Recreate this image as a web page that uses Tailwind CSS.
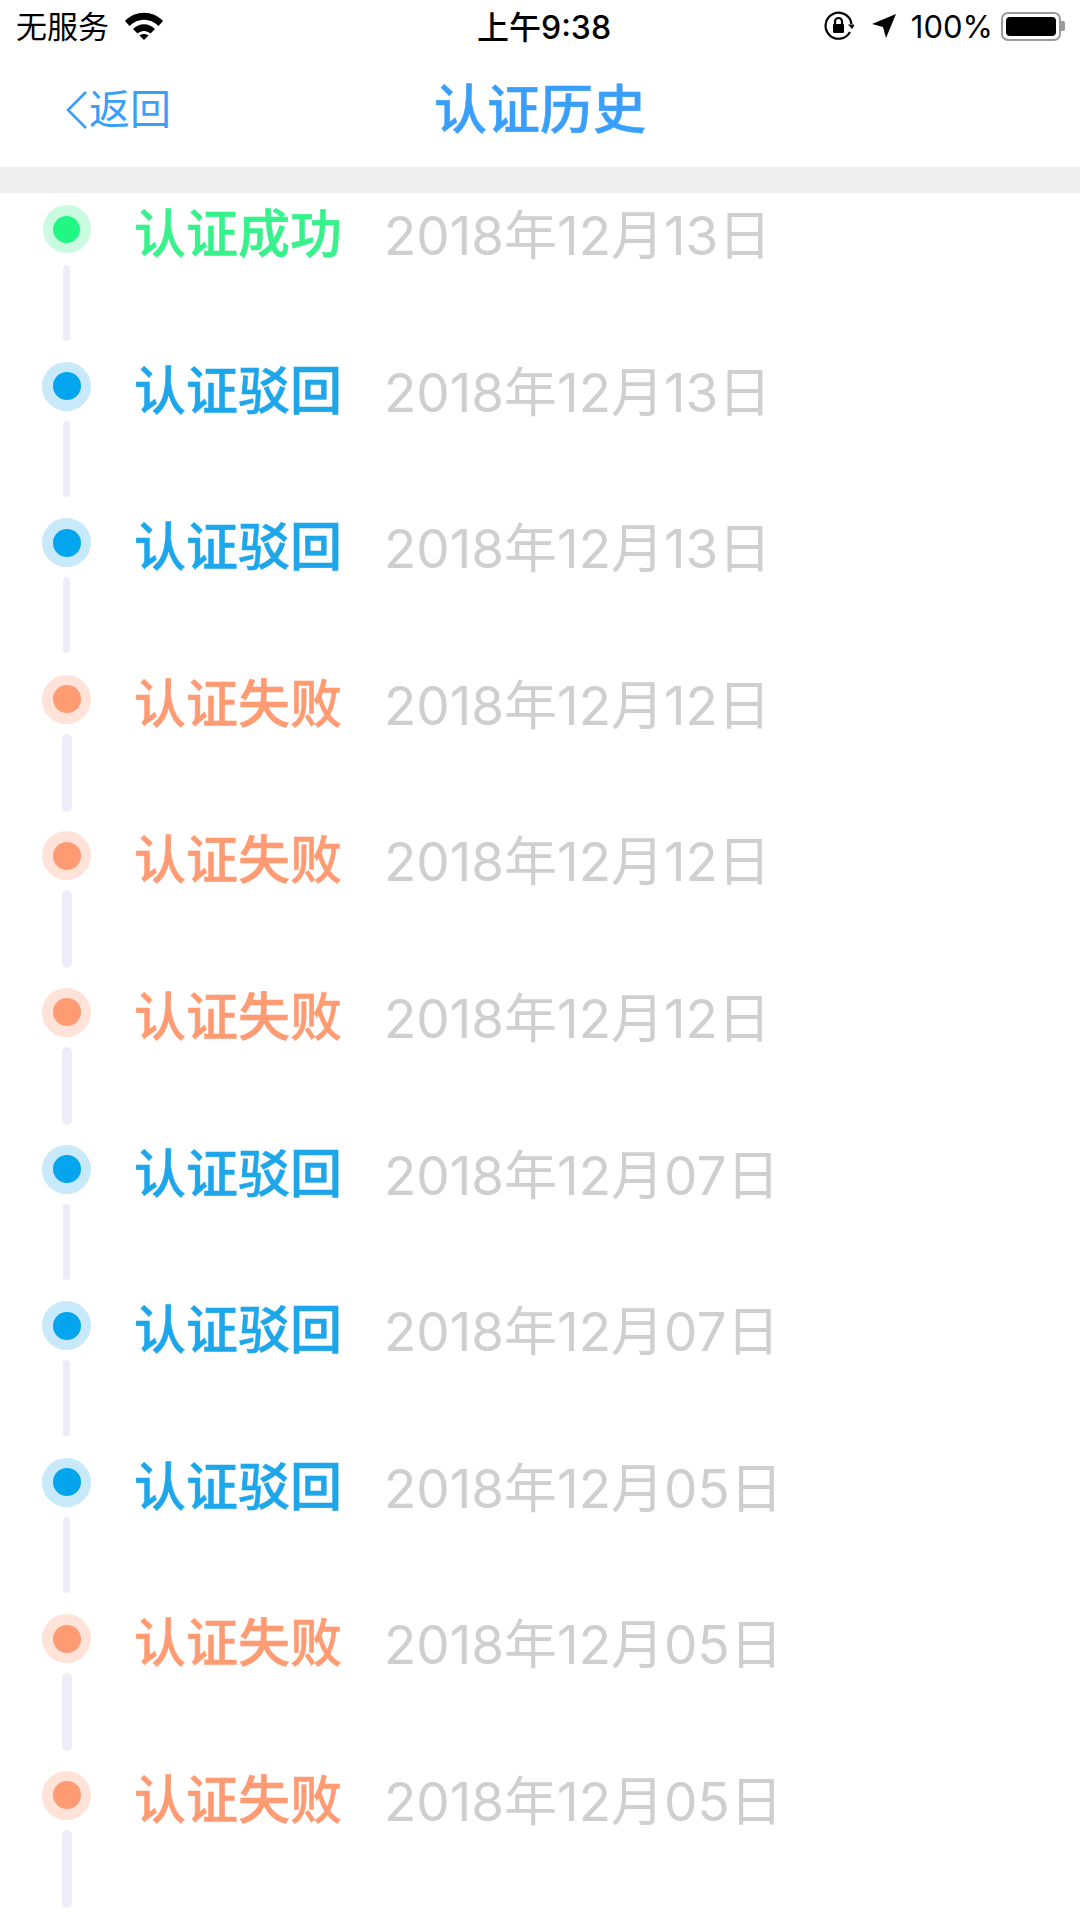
<!DOCTYPE html>
<html lang="zh-CN">

<head>
  <meta charset="UTF-8">
  <title>认证历史</title>
  <script src="https://cdn.jsdelivr.net/npm/@tailwindcss/browser@4"></script>
</head>

<body class="bg-white font-['Inter','Noto_Sans_CJK_SC',sans-serif]">
  <div class="w-[1080px] h-[1920px] overflow-hidden">
    <!-- Status bar -->
    <div class="relative h-[52px] flex items-center justify-between pl-[16px] pr-[13px] text-black">
      <div class="flex items-center gap-[16px]">
        <span class="text-[31px] leading-none">无服务</span>
        <svg class="w-[38px] h-[28px]" viewBox="0 0 38 28" fill="currentColor">
          <path d="M0 9 C10 -2 28 -2 38 9 L33.500 14 C25 5.500 13 5.500 4.500 14 Z" />
          <path d="M8 17 C14 10.500 24 10.500 30 17 L25.500 21.500 C22 18 16 18 12.500 21.500 Z" />
          <path d="M14.500 23.500 C17 21.500 21 21.500 23.500 23.500 L19 28 Z" />
        </svg>
      </div>
      <span class="absolute left-[477px] top-[10px] text-[32px] leading-[36px] font-medium">上午9:38</span>
      <div class="flex items-center">
        <svg class="w-[30px] h-[30px] mr-[17px]" viewBox="0 0 30 30" fill="none" stroke="currentColor" stroke-width="2.200">
          <path d="M26 21 A13 13 0 1 1 27.500 13" />
          <path d="M24 13.500 L28 18 L31 13.500 Z" fill="currentColor" stroke="none" />
          <rect x="9" y="13" width="11" height="9" rx="1" fill="currentColor" stroke="none" />
          <path d="M11 13 V10.500 A3.500 3.500 0 0 1 18 10.500 V13" />
        </svg>
        <svg class="w-[26px] h-[26px] mr-[14px]" viewBox="0 0 26 26" fill="currentColor">
          <path d="M25 1 L15 25 L12 14 L1 11 Z" />
        </svg>
        <span class="text-[31px] leading-none mr-[8px]">100%</span>
        <div class="w-[60px] h-[29px] rounded-[7px] border-[2px] border-[#9a9a9a] p-[3px]">
          <div class="w-full h-full rounded-[4px] bg-black"></div>
        </div>
        <div class="w-[4px] h-[10px] rounded-r-[2px] bg-[#9a9a9a] mr-[2px]"></div>
      </div>
    </div>

    <!-- Navigation bar -->
    <div class="relative h-[115px] flex items-center justify-center">
      <div class="absolute left-[65px] top-[37px] flex items-center text-[#3a9ffb]">
        <svg class="w-[24px] h-[40px]" viewBox="0 0 24 40" fill="none" stroke="currentColor" stroke-width="2.600">
          <path d="M21 2 L3 20 L21 38" />
        </svg>
        <span class="text-[41px] leading-none">返回</span>
      </div>
      <h1 class="text-[53px] leading-none font-medium [-webkit-text-stroke:0.5px] text-[#3a9ffb] mt-[2px]">认证历史</h1>
    </div>
    <div class="h-[26px] bg-[#efefef]"></div>

    <!-- History list -->
    <ul class="pt-[12px]">
      <li class="h-[156.6px] flex">
        <div class="w-[134px] flex flex-col items-center pr-[1px] shrink-0">
          <div class="w-[48px] h-[48px] rounded-full bg-[#c9fbe0] flex items-center justify-center">
            <div class="w-[27px] h-[27px] rounded-full bg-[#22f784]"></div>
          </div>
          <div class="w-[7px] h-[76px] mt-[12px] rounded-full bg-[#eeecf9]"></div>
        </div>
        <span class="w-[250px] mt-[1px] text-[52px] leading-[58px] font-medium [-webkit-text-stroke:0.5px] text-[#37f28b]">认证成功</span>
        <span class="mt-[2px] text-[53px] leading-[58px] text-[#cfcfcf]">2018年12月13日</span>
      </li>
      <li class="h-[156.6px] flex">
        <div class="w-[134px] flex flex-col items-center pr-[1px] shrink-0">
          <div class="w-[49px] h-[49px] rounded-full bg-[#c8e9fa] flex items-center justify-center">
            <div class="w-[28px] h-[28px] rounded-full bg-[#03a5ee]"></div>
          </div>
          <div class="w-[7px] h-[76px] mt-[10px] rounded-full bg-[#eeecf9]"></div>
        </div>
        <span class="w-[250px] mt-[1px] text-[52px] leading-[58px] font-medium [-webkit-text-stroke:0.5px] text-[#1ea6ea]">认证驳回</span>
        <span class="mt-[2px] text-[53px] leading-[58px] text-[#cfcfcf]">2018年12月13日</span>
      </li>
      <li class="h-[156.6px] flex">
        <div class="w-[134px] flex flex-col items-center pr-[1px] shrink-0">
          <div class="w-[49px] h-[49px] rounded-full bg-[#c8e9fa] flex items-center justify-center">
            <div class="w-[28px] h-[28px] rounded-full bg-[#03a5ee]"></div>
          </div>
          <div class="w-[7px] h-[76px] mt-[10px] rounded-full bg-[#eeecf9]"></div>
        </div>
        <span class="w-[250px] mt-[1px] text-[52px] leading-[58px] font-medium [-webkit-text-stroke:0.5px] text-[#1ea6ea]">认证驳回</span>
        <span class="mt-[2px] text-[53px] leading-[58px] text-[#cfcfcf]">2018年12月13日</span>
      </li>
      <li class="h-[156.6px] flex">
        <div class="w-[134px] flex flex-col items-center pr-[1px] shrink-0">
          <div class="w-[49px] h-[49px] rounded-full bg-[#ffe3d9] flex items-center justify-center">
            <div class="w-[28px] h-[28px] rounded-full bg-[#ff9b73]"></div>
          </div>
          <div class="w-[10px] h-[78px] mt-[10px] rounded-full bg-[#eeecf9]"></div>
        </div>
        <span class="w-[250px] mt-[1px] text-[52px] leading-[58px] font-medium [-webkit-text-stroke:0.5px] text-[#ff9b73]">认证失败</span>
        <span class="mt-[2px] text-[53px] leading-[58px] text-[#cfcfcf]">2018年12月12日</span>
      </li>
      <li class="h-[156.6px] flex">
        <div class="w-[134px] flex flex-col items-center pr-[1px] shrink-0">
          <div class="w-[49px] h-[49px] rounded-full bg-[#ffe3d9] flex items-center justify-center">
            <div class="w-[28px] h-[28px] rounded-full bg-[#ff9b73]"></div>
          </div>
          <div class="w-[10px] h-[78px] mt-[10px] rounded-full bg-[#eeecf9]"></div>
        </div>
        <span class="w-[250px] mt-[1px] text-[52px] leading-[58px] font-medium [-webkit-text-stroke:0.5px] text-[#ff9b73]">认证失败</span>
        <span class="mt-[2px] text-[53px] leading-[58px] text-[#cfcfcf]">2018年12月12日</span>
      </li>
      <li class="h-[156.6px] flex">
        <div class="w-[134px] flex flex-col items-center pr-[1px] shrink-0">
          <div class="w-[49px] h-[49px] rounded-full bg-[#ffe3d9] flex items-center justify-center">
            <div class="w-[28px] h-[28px] rounded-full bg-[#ff9b73]"></div>
          </div>
          <div class="w-[10px] h-[78px] mt-[10px] rounded-full bg-[#eeecf9]"></div>
        </div>
        <span class="w-[250px] mt-[1px] text-[52px] leading-[58px] font-medium [-webkit-text-stroke:0.5px] text-[#ff9b73]">认证失败</span>
        <span class="mt-[2px] text-[53px] leading-[58px] text-[#cfcfcf]">2018年12月12日</span>
      </li>
      <li class="h-[156.6px] flex">
        <div class="w-[134px] flex flex-col items-center pr-[1px] shrink-0">
          <div class="w-[49px] h-[49px] rounded-full bg-[#c8e9fa] flex items-center justify-center">
            <div class="w-[28px] h-[28px] rounded-full bg-[#03a5ee]"></div>
          </div>
          <div class="w-[7px] h-[76px] mt-[10px] rounded-full bg-[#eeecf9]"></div>
        </div>
        <span class="w-[250px] mt-[1px] text-[52px] leading-[58px] font-medium [-webkit-text-stroke:0.5px] text-[#1ea6ea]">认证驳回</span>
        <span class="mt-[2px] text-[53px] leading-[58px] text-[#cfcfcf]">2018年12月07日</span>
      </li>
      <li class="h-[156.6px] flex">
        <div class="w-[134px] flex flex-col items-center pr-[1px] shrink-0">
          <div class="w-[49px] h-[49px] rounded-full bg-[#c8e9fa] flex items-center justify-center">
            <div class="w-[28px] h-[28px] rounded-full bg-[#03a5ee]"></div>
          </div>
          <div class="w-[7px] h-[76px] mt-[10px] rounded-full bg-[#eeecf9]"></div>
        </div>
        <span class="w-[250px] mt-[1px] text-[52px] leading-[58px] font-medium [-webkit-text-stroke:0.5px] text-[#1ea6ea]">认证驳回</span>
        <span class="mt-[2px] text-[53px] leading-[58px] text-[#cfcfcf]">2018年12月07日</span>
      </li>
      <li class="h-[156.6px] flex">
        <div class="w-[134px] flex flex-col items-center pr-[1px] shrink-0">
          <div class="w-[49px] h-[49px] rounded-full bg-[#c8e9fa] flex items-center justify-center">
            <div class="w-[28px] h-[28px] rounded-full bg-[#03a5ee]"></div>
          </div>
          <div class="w-[7px] h-[76px] mt-[10px] rounded-full bg-[#eeecf9]"></div>
        </div>
        <span class="w-[250px] mt-[1px] text-[52px] leading-[58px] font-medium [-webkit-text-stroke:0.5px] text-[#1ea6ea]">认证驳回</span>
        <span class="mt-[2px] text-[53px] leading-[58px] text-[#cfcfcf]">2018年12月05日</span>
      </li>
      <li class="h-[156.6px] flex">
        <div class="w-[134px] flex flex-col items-center pr-[1px] shrink-0">
          <div class="w-[49px] h-[49px] rounded-full bg-[#ffe3d9] flex items-center justify-center">
            <div class="w-[28px] h-[28px] rounded-full bg-[#ff9b73]"></div>
          </div>
          <div class="w-[10px] h-[78px] mt-[10px] rounded-full bg-[#eeecf9]"></div>
        </div>
        <span class="w-[250px] mt-[1px] text-[52px] leading-[58px] font-medium [-webkit-text-stroke:0.5px] text-[#ff9b73]">认证失败</span>
        <span class="mt-[2px] text-[53px] leading-[58px] text-[#cfcfcf]">2018年12月05日</span>
      </li>
      <li class="h-[156.6px] flex">
        <div class="w-[134px] flex flex-col items-center pr-[1px] shrink-0">
          <div class="w-[49px] h-[49px] rounded-full bg-[#ffe3d9] flex items-center justify-center">
            <div class="w-[28px] h-[28px] rounded-full bg-[#ff9b73]"></div>
          </div>
          <div class="w-[10px] h-[78px] mt-[10px] rounded-full bg-[#eeecf9]"></div>
        </div>
        <span class="w-[250px] mt-[1px] text-[52px] leading-[58px] font-medium [-webkit-text-stroke:0.5px] text-[#ff9b73]">认证失败</span>
        <span class="mt-[2px] text-[53px] leading-[58px] text-[#cfcfcf]">2018年12月05日</span>
      </li>
    </ul>
  </div>
</body>

</html>
